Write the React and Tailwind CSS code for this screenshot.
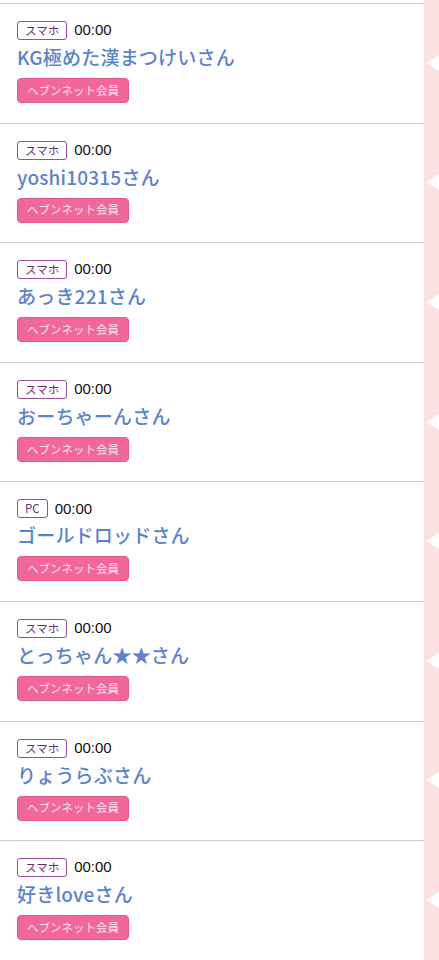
const rows = [
  { device: 'スマホ', name: 'KG極めた漢まつけいさん' },
  { device: 'スマホ', name: 'yoshi10315さん' },
  { device: 'スマホ', name: 'あっき221さん' },
  { device: 'スマホ', name: 'おーちゃーんさん' },
  { device: 'PC', name: 'ゴールドロッドさん' },
  { device: 'スマホ', name: 'とっちゃん★★さん' },
  { device: 'スマホ', name: 'りょうらぶさん' },
  { device: 'スマホ', name: '好きloveさん' },
];

const jp = { fontFamily: '"Noto Sans CJK JP", "Liberation Sans", sans-serif' };

export default function App() {
  return (
    <div className="w-[439px] h-[960px] overflow-hidden bg-white flex" style={jp}>
      {/* list */}
      <div className="w-[424px] pt-[3px]">
        {rows.map((r, i) => (
          <div key={i} className="h-[119.6px] border-t border-[#c9c9c9] pl-[17px] pt-[17px]">
            <div className="flex items-center gap-[7px] h-[19px]">
              <span className="h-[19px] px-[7px] border border-[#9a4a9a] rounded-[3px] text-[11.5px] leading-[17px] text-[#6a2d74]">
                {r.device}
              </span>
              <span className="text-[15px] text-[#111]" style={{ fontFamily: '"Liberation Sans", sans-serif' }}>
                00:00
              </span>
            </div>
            <div className="mt-[4px] text-[19px] leading-[26px] font-medium text-[#5b83cb] tracking-[0.2px]">{r.name}</div>
            <div className="mt-[8px] w-[112px] h-[25px] rounded-[4px] bg-[#f2679b] border border-[#e4588c] flex items-center justify-center text-[11.5px] text-[#fde4ee]">
              ヘブンネット会員
            </div>
          </div>
        ))}
      </div>

      {/* pink side strip */}
      <div className="flex-1 bg-[#fde0e1] pt-[3px]">
        {rows.map((_, i) => (
          <div key={i} className="h-[119.6px] flex items-center justify-end">
            <div className="w-0 h-0 border-y-[8px] border-y-transparent border-r-[13px] border-r-white" />
          </div>
        ))}
      </div>
    </div>
  );
}
